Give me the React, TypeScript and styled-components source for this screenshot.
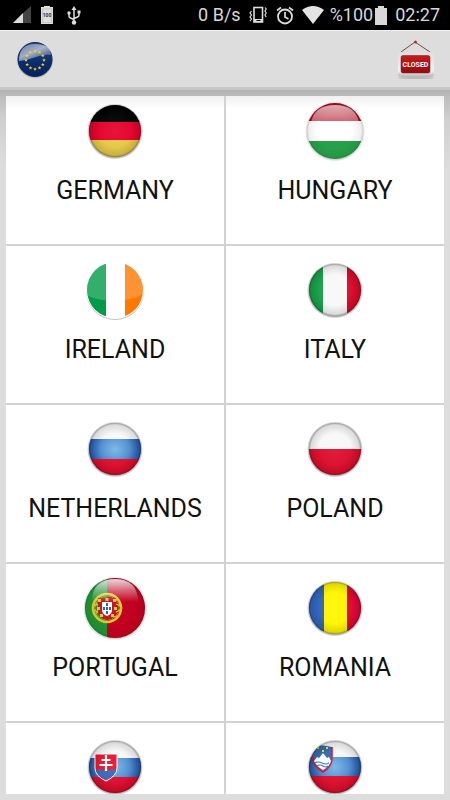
import React from "react";
import styled, { createGlobalStyle } from "styled-components";

const GlobalStyle = createGlobalStyle`
  * { box-sizing: border-box; }
  body {
    margin: 0;
    background: #ddd;
    font-family: Roboto, "Noto Sans", sans-serif;
  }
`;

const Screen = styled.div`
  display: flex;
  flex-direction: column;
  height: 100vh;
  overflow: hidden;
`;

const StatusBar = styled.header`
  display: flex;
  align-items: center;
  justify-content: space-between;
  flex: none;
  height: 30px;
  padding: 0 10px 0 12px;
  background: #000;
  color: #d8d8d8;
  font-size: 18px;
  line-height: 30px;
`;

const StatusGroup = styled.div<{ $gap: number }>`
  display: flex;
  align-items: center;
  gap: ${(p) => p.$gap}px;
  white-space: nowrap;
  svg { display: block; flex: none; }
`;

const BatteryLevel = styled.span`
  display: flex;
  align-items: center;
  gap: 2px;
`;

const ActionBar = styled.nav`
  display: flex;
  align-items: center;
  justify-content: space-between;
  flex: none;
  height: 60px;
  padding: 2px 14px 0 16px;
  background: #ddd;
  border-top: 1px solid #efefef;
  border-bottom: 3px solid #c6c6c6;
`;

const BarButton = styled.button`
  padding: 0;
  border: 0;
  background: none;
  cursor: pointer;
  svg { display: block; }
`;

const Content = styled.main`
  display: flex;
  flex: 1;
  min-height: 0;
  padding: 6px;
  background: linear-gradient(#b2b2b2, #bcbcbc 6px, #d0d0d0 30px, #ddd 80px);
`;

const Scroller = styled.div`
  flex: 1;
  overflow-x: hidden;
  overflow-y: auto;
  scrollbar-width: none;
  background: #d2d2d2;
`;

const CountryGrid = styled.div`
  display: grid;
  grid-template-columns: 1fr 1fr;
  grid-auto-rows: 157px;
  gap: 2px;
  margin-top: -9px;
`;

const CountryCell = styled.button<{ $shaded: boolean }>`
  display: flex;
  flex-direction: column;
  align-items: center;
  gap: 12px;
  padding: 12px 0 0;
  border: 0;
  background: ${(p) =>
    p.$shaded ? "linear-gradient(#f0f0f0 9px, #fff 22px)" : "#fff"};
  color: #111;
  font-family: inherit;
  font-size: 25px;
  line-height: 32px;
  cursor: pointer;
  svg { display: block; flex: none; }
`;

type FlagKind =
  | "germany" | "hungary" | "ireland" | "italy" | "netherlands"
  | "poland" | "portugal" | "romania" | "slovakia" | "slovenia";

const radii: Partial<Record<FlagKind, number>> = {
  hungary: 28,
  ireland: 28,
  portugal: 30,
};

function Bands({ colors, stops, vertical }: { colors: string[]; stops: number[]; vertical?: boolean }) {
  return (
    <>
      {colors.map((c, i) =>
        vertical ? (
          <rect key={i} x={stops[i]} y="0" width={stops[i + 1] - stops[i]} height="64" fill={c} />
        ) : (
          <rect key={i} x="0" y={stops[i]} width="64" height={stops[i + 1] - stops[i]} fill={c} />
        )
      )}
    </>
  );
}

function PortugalArms() {
  return (
    <g>
      <circle cx="24" cy="32" r="14" fill="none" stroke="#ddc92e" strokeWidth="2.6" />
      <circle cx="24" cy="32" r="12" fill="none" stroke="#a79c20" strokeWidth="0.8" />
      <ellipse cx="24" cy="32" rx="14" ry="5" fill="none" stroke="#d9c62c" strokeWidth="1.4" />
      <path d="M12 25Q24 46 36 39M12 39Q24 18 36 25" fill="none" stroke="#cdbb28" strokeWidth="1.3" />
      <path d="M15 22h18v13q0 7-9 9q-9-2-9-9z" fill="#c4162a" />
      <path d="M19 26h10v8q0 4-5 6q-5-2-5-6z" fill="#fff" />
      <path d="M15 23h3v3h-3zM22.500 22h3v3h-3zM30 23h3v3h-3zM14 31h3v3h-3zM31 31h3v3h-3zM17 38h3v3h-3zM28 38h3v3h-3z" fill="#e4c82e" />
      <path d="M23 27h2v3h-2zM20 31h2v3h-2zM23 31h2v3h-2zM26 31h2v3h-2zM23 35h2v3h-2z" fill="#3c62b4" />
    </g>
  );
}

function SlovakiaArms() {
  return (
    <g>
      <path d="M12 19h22v14q0 8-11 13q-11-5-11-13z" fill="#e3132b" />
      <path d="M13 36q4-4 7 0q3-5 6 0q3-4 7 0q-2 6-10 9q-8-3-10-9z" fill="#3766b5" />
      <path d="M12 19h22v14q0 8-11 13q-11-5-11-13z" fill="none" stroke="#fff" strokeWidth="1" />
      <path d="M23 20v16M18.500 25h9M16.500 30h13" stroke="#fff" strokeWidth="2.200" fill="none" />
    </g>
  );
}

function SloveniaArms() {
  return (
    <g>
      <path d="M8 11q10-2 21 1v11q0 9-9 14q-10-5-11-16z" fill="#3469ae" />
      <path d="M29 12v11q0 9-9 14q-9-5-11-16" fill="none" stroke="#d8142c" strokeWidth="1.600" />
      <path d="M11 26l3-4l2 1l4-5l4 5l2-1l2 4q-1 5-8 9q-7-4-9-9z" fill="#fff" />
      <path d="M12 28q3-2 7 0t7 0M14 31q3-2 6 0t5 0" stroke="#2f76bb" strokeWidth="1.200" fill="none" />
      <path d="M14 12h2v2h-2zM23 12h2v2h-2zM19 15h2v2h-2z" fill="#f3e21c" />
    </g>
  );
}

const designs: Record<FlagKind, React.ReactNode> = {
  germany: <Bands colors={["#000", "#e4002b", "#e6c846"]} stops={[0, 23, 41, 64]} />,
  hungary: <Bands colors={["#b3081c", "#fff", "#27a048"]} stops={[0, 22, 42, 64]} />,
  ireland: <Bands vertical colors={["#009b48", "#fff", "#ff7900"]} stops={[0, 23, 42, 64]} />,
  italy: <Bands vertical colors={["#16a04a", "#f8f8f8", "#dc0829"]} stops={[0, 20, 44, 64]} />,
  netherlands: <Bands colors={["#f8f8f8", "url(#blue-band)", "#dc0b2b"]} stops={[0, 22, 42, 64]} />,
  poland: <Bands colors={["#f8f8f8", "#dc0c2a"]} stops={[0, 32, 64]} />,
  portugal: (
    <>
      <Bands vertical colors={["#1f9436", "#c3001f"]} stops={[0, 24, 64]} />
      <PortugalArms />
    </>
  ),
  romania: <Bands vertical colors={["#2f64bb", "#fff500", "#e00534"]} stops={[0, 21, 44, 64]} />,
  slovakia: (
    <>
      <Bands colors={["#f8f8f8", "url(#blue-band)", "#dc0b2b"]} stops={[0, 23, 42, 64]} />
      <SlovakiaArms />
    </>
  ),
  slovenia: (
    <>
      <Bands colors={["#f8f8f8", "url(#blue-band)", "#dc0b2b"]} stops={[0, 22, 41, 64]} />
      <SloveniaArms />
    </>
  ),
};

function FlagGloss({ kind }: { kind: FlagKind }) {
  if (kind === "ireland") {
    return <path d="M0 0h64v34Q50 43 32 43T0 36z" fill="#fff" opacity="0.2" />;
  }
  if (kind === "hungary") {
    return <path d="M8 24Q11 6 32 6T56 24z" fill="url(#gloss)" />;
  }
  if (kind === "portugal") {
    return <path d="M9 26Q9 3 32 3T55 26z" fill="url(#fading-gloss)" />;
  }
  return <rect width="64" height="64" fill="url(#center-light)" />;
}

function Flag({ kind }: { kind: FlagKind }) {
  const r = radii[kind] ?? 26;
  const flat = kind === "ireland";
  const soft = kind === "portugal" || kind === "hungary";
  return (
    <svg width="64" height="64" viewBox="0 0 64 64" aria-hidden="true">
      <defs>
        <clipPath id={`clip-${kind}`}>
          <circle cx="32" cy="32" r={r} />
        </clipPath>
        <radialGradient id={`edge-${kind}`} gradientUnits="userSpaceOnUse" cx="32" cy="32" r={r}>
          <stop offset="0.6" stopColor="#000" stopOpacity="0" />
          <stop offset="0.93" stopColor="#000" stopOpacity="0.12" />
          <stop offset="1" stopColor="#000" stopOpacity="0.38" />
        </radialGradient>
        <radialGradient id={`shadow-${kind}`} gradientUnits="userSpaceOnUse" cx="32" cy="32.500" r={r + 2}>
          <stop offset="0.9" stopColor="#000" stopOpacity="0.45" />
          <stop offset="1" stopColor="#000" stopOpacity="0" />
        </radialGradient>
      </defs>
      {flat ? (
        <>
          <circle cx="32" cy="33" r="29" fill="#c4c4c4" />
          <circle cx="32" cy="32" r="29" fill="#fff" />
        </>
      ) : (
        <circle cx="32" cy="32.500" r={r + 2} fill={`url(#shadow-${kind})`} opacity={soft ? 0.6 : 1} />
      )}
      <g clipPath={`url(#clip-${kind})`}>
        {designs[kind]}
        <FlagGloss kind={kind} />
      </g>
      {!flat && <circle cx="32" cy="32" r={r} fill={`url(#edge-${kind})`} opacity={soft ? 0.5 : 1} />}
    </svg>
  );
}

function SharedGradients() {
  return (
    <defs>
      <linearGradient id="gloss" x1="0" y1="0" x2="0" y2="1">
        <stop offset="0" stopColor="#fff" stopOpacity="0.7" />
        <stop offset="1" stopColor="#fff" stopOpacity="0.35" />
      </linearGradient>
      <linearGradient id="fading-gloss" x1="0" y1="0" x2="0" y2="1">
        <stop offset="0" stopColor="#fff" stopOpacity="0.9" />
        <stop offset="0.5" stopColor="#fff" stopOpacity="0.4" />
        <stop offset="1" stopColor="#fff" stopOpacity="0" />
      </linearGradient>
      <radialGradient id="blue-band" gradientUnits="userSpaceOnUse" cx="32" cy="32" r="27">
        <stop offset="0" stopColor="#74b2e6" />
        <stop offset="0.5" stopColor="#4f8ed0" />
        <stop offset="1" stopColor="#1d4fa6" />
      </radialGradient>
      <radialGradient id="center-light">
        <stop offset="0" stopColor="#fff" stopOpacity="0.08" />
        <stop offset="0.8" stopColor="#fff" stopOpacity="0" />
      </radialGradient>
      <linearGradient id="eu-blue" x1="0" y1="0" x2="0" y2="1">
        <stop offset="0" stopColor="#2a4880" />
        <stop offset="0.6" stopColor="#0b2c6c" />
        <stop offset="1" stopColor="#04225e" />
      </linearGradient>
      <linearGradient id="eu-gloss" x1="0" y1="0" x2="0.8" y2="1">
        <stop offset="0" stopColor="#fff" stopOpacity="0.3" />
        <stop offset="0.5" stopColor="#fff" stopOpacity="0.6" />
        <stop offset="1" stopColor="#fff" stopOpacity="0.1" />
      </linearGradient>
      <linearGradient id="sign-red" x1="0" y1="0" x2="0" y2="1">
        <stop offset="0" stopColor="#c71a1c" />
        <stop offset="1" stopColor="#930b0f" />
      </linearGradient>
      <linearGradient id="sign-board" x1="0" y1="0" x2="0" y2="1">
        <stop offset="0" stopColor="#dedede" />
        <stop offset="0.75" stopColor="#f1f1f1" />
        <stop offset="1" stopColor="#b4b4b4" />
      </linearGradient>
    </defs>
  );
}

const euStars = Array.from({ length: 12 }, (_, i) => {
  const a = (i * Math.PI) / 6;
  return { x: 19 + 9 * Math.sin(a), y: 19 - 9 * Math.cos(a) };
});

function EuropeLogo() {
  return (
    <svg width="38" height="38" viewBox="0 0 38 38" aria-hidden="true">
      <SharedGradients />
      <circle cx="19" cy="19" r="18" fill="#000" opacity="0.15" />
      <circle cx="19" cy="18.500" r="17" fill="url(#eu-blue)" stroke="#142d5c" />
      <path d="M3 20Q3 3 19 3T35 14Q28 13 20 16T3 20z" fill="url(#eu-gloss)" />
      {euStars.map((s, i) => (
        <path
          key={i}
          transform={`translate(${s.x} ${s.y})`}
          d="M0-1.8L.5-.6L1.8-.5L.8.4L1.1 1.6L0 .9L-1.1 1.6L-.8.4L-1.8-.5L-.5-.6z"
          fill="#f5cf2c"
        />
      ))}
    </svg>
  );
}

function ClosedSign() {
  return (
    <svg width="40" height="40" viewBox="0 0 40 40" aria-hidden="true">
      <path d="M5 12L19 2L34 12" fill="none" stroke="#754b42" strokeWidth="1" />
      <circle cx="19.500" cy="2" r="1.500" fill="#b3341b" />
      <ellipse cx="20" cy="38" rx="18" ry="1" fill="#b8b8b8" />
      <rect x="2" y="12" width="36" height="25" rx="3" fill="url(#sign-board)" />
      <rect x="5" y="15.500" width="29" height="17.500" rx="2" fill="url(#sign-red)" stroke="#7f1516" strokeWidth="0.500" />
      <text x="19.500" y="27" textAnchor="middle" fontFamily="Roboto, sans-serif" fontSize="7" fontWeight="700" fill="#fff">
        CLOSED
      </text>
    </svg>
  );
}

function SignalIcon() {
  return (
    <svg width="20" height="18" viewBox="0 0 20 18" aria-hidden="true">
      <path d="M19 0v17H11V7z" fill="#444" />
      <path d="M11 7v10H1z" fill="#ddd" />
    </svg>
  );
}

function BatteryBadge() {
  return (
    <svg width="12" height="18" viewBox="0 0 12 18" aria-hidden="true">
      <path d="M3 0h6v1h3v17H0V1h3z" fill="#ddd" />
      <path d="M1.500 3h9v13.500h-9z" fill="none" stroke="#aaa" strokeWidth="0.500" />
      <text x="6" y="11" textAnchor="middle" fontFamily="Roboto, sans-serif" fontSize="5" fontWeight="700" fill="#333">100</text>
    </svg>
  );
}

function UsbIcon() {
  return (
    <svg width="14" height="19" viewBox="0 0 14 19" aria-hidden="true">
      <path d="M7 3v13M2 7v3q0 1.500 1.500 2L7 13.500M12 7v2q0 1.500-1.500 2L7 12.500" fill="none" stroke="#ddd" strokeWidth="1.500" />
      <path d="M7 0l2.500 4h-5zM10.500 4.500h3v3h-3z" fill="#ddd" />
      <circle cx="2" cy="7" r="1.700" fill="#ddd" />
      <circle cx="7" cy="16.500" r="2.200" fill="#ddd" />
    </svg>
  );
}

function VibrateIcon() {
  return (
    <svg width="18" height="18" viewBox="0 0 18 18" aria-hidden="true">
      <rect x="5" y="1.500" width="8.500" height="14.500" fill="none" stroke="#ddd" strokeWidth="1.600" />
      <path d="M5 13h9v3H5z" fill="#ddd" />
      <path d="M7.500 14.500h4" stroke="#000" />
      <path d="M2.500 5l-1.500 2l1.500 2l-1.500 2l1.500 2l-1.500 2M16 1.500l1.200 1.500l-1.200 2l1.200 2l-1.200 2l1.200 2" fill="none" stroke="#ddd" strokeWidth="1.200" />
    </svg>
  );
}

function AlarmIcon() {
  return (
    <svg width="18" height="19" viewBox="0 0 18 19" aria-hidden="true">
      <circle cx="9" cy="10.500" r="7" fill="none" stroke="#ddd" strokeWidth="1.800" />
      <path d="M9 6v5l3.500 2M1 4.500L5 1.500M17 4.500L13 1.500" fill="none" stroke="#ddd" strokeWidth="1.700" />
    </svg>
  );
}

function WifiIcon() {
  return (
    <svg width="22" height="18" viewBox="0 0 22 18" aria-hidden="true">
      <path d="M0 4Q11-4 22 4L11 18z" fill="#e4e4e4" />
    </svg>
  );
}

function BatteryIcon() {
  return (
    <svg width="12" height="19" viewBox="0 0 12 19" aria-hidden="true">
      <path d="M3 0h6v2h3v17H0V2h3z" fill="#d8d8d8" />
    </svg>
  );
}

const countries: { kind: FlagKind; name: string }[] = [
  { kind: "germany", name: "GERMANY" },
  { kind: "hungary", name: "HUNGARY" },
  { kind: "ireland", name: "IRELAND" },
  { kind: "italy", name: "ITALY" },
  { kind: "netherlands", name: "NETHERLANDS" },
  { kind: "poland", name: "POLAND" },
  { kind: "portugal", name: "PORTUGAL" },
  { kind: "romania", name: "ROMANIA" },
  { kind: "slovakia", name: "SLOVAKIA" },
  { kind: "slovenia", name: "SLOVENIA" },
];

export default function App() {
  return (
    <Screen>
      <GlobalStyle />
      <StatusBar>
        <StatusGroup $gap={14}>
          <StatusGroup $gap={9}>
            <SignalIcon />
            <BatteryBadge />
          </StatusGroup>
          <UsbIcon />
        </StatusGroup>
        <StatusGroup $gap={8}>
          <span>0 B/s</span>
          <StatusGroup $gap={9}>
            <VibrateIcon />
            <AlarmIcon />
          </StatusGroup>
          <StatusGroup $gap={6}>
            <WifiIcon />
            <BatteryLevel>
              %100
              <BatteryIcon />
            </BatteryLevel>
          </StatusGroup>
          <span>02:27</span>
        </StatusGroup>
      </StatusBar>
      <ActionBar>
        <BarButton type="button" aria-label="Europe">
          <EuropeLogo />
        </BarButton>
        <BarButton type="button" aria-label="Close">
          <ClosedSign />
        </BarButton>
      </ActionBar>
      <Content>
        <Scroller>
          <CountryGrid>
            {countries.map((c, i) => (
              <CountryCell key={c.kind} type="button" $shaded={i < 2}>
                <Flag kind={c.kind} />
                {c.name}
              </CountryCell>
            ))}
          </CountryGrid>
        </Scroller>
      </Content>
    </Screen>
  );
}
